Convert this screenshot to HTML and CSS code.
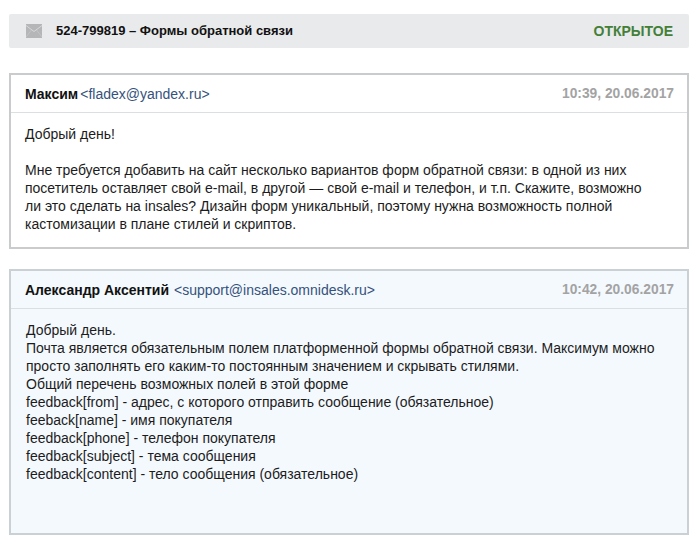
FILE: index.html
```html
<!DOCTYPE html>
<html lang="ru">
<head>
<meta charset="utf-8">
<title>524-799819</title>
<link rel="stylesheet" href="styles.css">
</head>
<body>
<main class="page">
  <header class="bar">
    <svg class="mail" width="16" height="14" viewBox="0 0 16 14" aria-hidden="true">
      <rect x="0" y="0" width="16" height="14" fill="#b4b6b8"/>
      <path d="M0 1.5 L8 7.5 L16 1.5" fill="none" stroke="#d6d8da" stroke-width="1"/>
      <path d="M0 13 L5.5 6 M16 13 L10.5 6" fill="none" stroke="#c4c6c8" stroke-width="0.8"/>
    </svg>
    <h1 class="title">524-799819 – Формы обратной связи</h1>
    <span class="status">ОТКРЫТОЕ</span>
  </header>

  <article class="card">
    <div class="head">
      <span class="who"><b class="name">Максим</b><span class="mail-addr">&lt;fladex@yandex.ru&gt;</span></span>
      <time class="date">10:39, 20.06.2017</time>
    </div>
    <div class="body">
      <p>Добрый день!</p>
      <p class="para">Мне требуется добавить на сайт несколько вариантов форм обратной связи: в одной из них<br>посетитель оставляет свой e-mail, в другой — свой e-mail и телефон, и т.п. Скажите, возможно<br>ли это сделать на insales? Дизайн форм уникальный, поэтому нужна возможность полной<br>кастомизации в плане стилей и скриптов.</p>
    </div>
  </article>

  <article class="card staff">
    <div class="head">
      <span class="who"><b class="name">Александр Аксентий</b><span class="mail-addr wide">&lt;support@insales.omnidesk.ru&gt;</span></span>
      <time class="date">10:42, 20.06.2017</time>
    </div>
    <div class="body">
      <p>Добрый день.<br>Почта является обязательным полем платформенной формы обратной связи. Максимум можно<br>просто заполнять его каким-то постоянным значением и скрывать стилями.<br>Общий перечень возможных полей в этой форме<br>feedback[from] - адрес, с которого отправить сообщение (обязательное)<br>feeback[name] - имя покупателя<br>feedback[phone] - телефон покупателя<br>feedback[subject] - тема сообщения<br>feedback[content] - тело сообщения (обязательное)</p>
    </div>
  </article>
</main>
</body>
</html>
```

FILE: styles.css
```css
html, body {
  margin: 0;
  padding: 0;
  background: #fff;
}
body {
  font-family: "Liberation Sans", Arial, sans-serif;
  font-size: 14px;
  line-height: 18px;
  color: #1c1c1c;
}
.page {
  width: 680px;
  height: 542px;
  box-sizing: border-box;
  padding: 14px 0 0;
  margin-left: 9px;
}
.bar {
  display: flex;
  align-items: center;
  height: 34px;
  background: #e9eaec;
  border-radius: 2px;
  padding: 0 16px 0 17px;
  margin-bottom: 25px;
}
.mail {
  flex: none;
  margin-right: 14px;
}
.title {
  flex: 1;
  margin: 0;
  font-size: 13px;
  font-weight: bold;
  color: #111;
}
.status {
  font-size: 14px;
  font-weight: bold;
  color: #438037;
}
.card {
  border: 2px solid #c9cbcc;
  background: #fff;
  box-sizing: border-box;
  height: 176px;
  margin-bottom: 20px;
}
.staff {
  height: 266px;
  background: #f4f9fe;
  border-color: #cbd0d4;
}
.head {
  display: flex;
  justify-content: space-between;
  align-items: center;
  height: 37px;
  padding: 0 13px 0 14px;
  border-bottom: 1px solid #dcdfe1;
}
.name {
  color: #111;
}
.mail-addr {
  margin-left: 2px;
  color: #34527c;
}
.wide {
  margin-left: 5px;
}
.date {
  font-size: 13.8px;
  font-weight: bold;
  color: #a3a3a3;
}
.body {
  padding: 12px 15px 0 14px;
}
.staff .body {
  padding-left: 15px;
}
.body p {
  margin: 0;
}
.body .para {
  margin-top: 18px;
}
```
